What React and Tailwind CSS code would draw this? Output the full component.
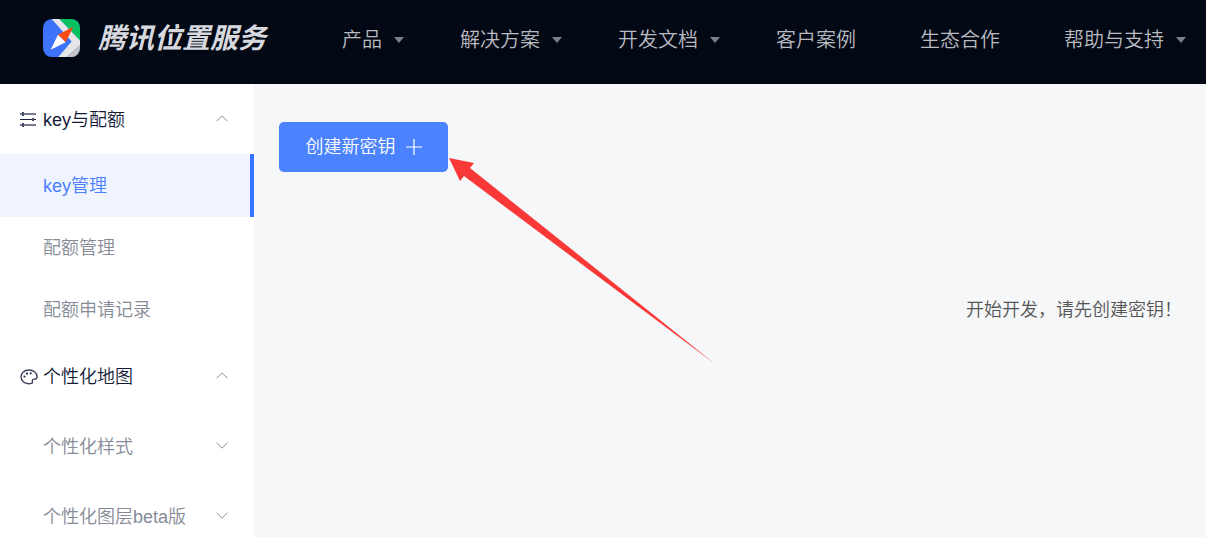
import React from 'react';

const navItems = [
  { label: '产品', menu: true },
  { label: '解决方案', menu: true },
  { label: '开发文档', menu: true },
  { label: '客户案例' },
  { label: '生态合作' },
  { label: '帮助与支持', menu: true },
];

const Logo = () => (
  <svg className="h-[38px] w-[37px]" viewBox="0 0 111 111" preserveAspectRatio="none" aria-hidden="true">
    <defs>
      <clipPath id="logo-shape">
        <rect width="111" height="111" rx="26" />
      </clipPath>
    </defs>
    <g clipPath="url(#logo-shape)">
      <rect width="111" height="111" fill="#3c73fa" />
      <path d="M49 0H111V63Z" fill="#05c160" />
      <path d="M26 0H49L111 63V76L71 111H46L86 66Z" fill="#e6e6e8" />
      <path d="M111 76V111H71Z" fill="#c3c4c6" />
      <path d="M91 23L45 46L68 68Z" fill="#fb4a14" />
      <path d="M23 90L45 46L68 68Z" fill="#fff" />
    </g>
  </svg>
);

const SlidersIcon = () => (
  <svg className="h-4 w-4" viewBox="0 0 16 16" fill="none" aria-hidden="true">
    <path d="M0 2H16M0 13H16" stroke="#777b90" strokeWidth="2" />
    <path d="M0 7.5H16" stroke="#1b2240" strokeWidth="1" />
    <path d="M3 0V4M13 6V9M3 11V15" stroke="#454b66" strokeWidth="2" />
  </svg>
);

const PaletteIcon = () => (
  <svg className="h-4 w-[18px]" viewBox="0 0 18 16" fill="none" aria-hidden="true">
    <path
      d="M9 1C4.400 1 1 3.900 1 7.800C1 11.900 4.400 14.800 8.500 14.800C10.300 14.800 12 14.600 12.300 13.800C12.700 12.700 11.800 11.300 12.800 10.500C13.700 9.800 15.600 10.600 16.500 9.500C17 8.800 17 8.200 17 7.400C16.800 3.700 13.400 1 9 1Z"
      stroke="#3a405a"
      strokeWidth="1.400"
    />
    <g fill="#2a3150">
      <circle cx="4.500" cy="7.500" r="1.100" />
      <circle cx="7" cy="4.700" r="1.100" />
      <circle cx="10.700" cy="4.300" r="1.100" />
    </g>
  </svg>
);

const Chevron = ({ up }) => (
  <svg className="mb-1 h-[7px] w-3" viewBox="0 0 12 7" fill="none" stroke="#8f9198" aria-hidden="true">
    <path d={up ? 'M0.500 6.300L6 0.800L11.500 6.300' : 'M0.500 0.700L6 6.200L11.500 0.700'} />
  </svg>
);

const Header = () => (
  <header className="flex h-[84px] shrink-0 items-center bg-[#020814] pb-2 pl-[43px]">
    <a href="#" className="flex shrink-0 items-center gap-[18px]">
      <Logo />
      <span className="pt-0.5 text-[28px] leading-9 font-bold whitespace-nowrap text-[#d8d9df] italic">腾讯位置服务</span>
    </a>
    <nav className="mt-1 ml-19 flex shrink-0 gap-14">
      {navItems.map((item) =>
        item.menu ? (
          <button key={item.label} type="button" className="flex items-center gap-3 text-xl font-[350] whitespace-nowrap text-[#b9bbc1]">
            {item.label}
            <svg className="h-[6px] w-[10px]" viewBox="0 0 10 6" fill="#7d808a" aria-hidden="true">
              <path d="M0 0H10L5 6Z" />
            </svg>
          </button>
        ) : (
          <a key={item.label} href="#" className="pr-2 text-xl font-[350] whitespace-nowrap text-[#b9bbc1]">
            {item.label}
          </a>
        )
      )}
    </nav>
  </header>
);

const GroupTitle = ({ icon, children }) => (
  <button type="button" className="flex h-[70px] w-full items-center pt-0.5 pr-[26px] pl-5 text-lg font-[350] text-[#141b38]">
    <span className="flex w-[23px] items-center">{icon}</span>
    <span className="flex-1 text-left">{children}</span>
    <Chevron up />
  </button>
);

const MenuLink = ({ active, children }) => (
  <a
    href="#"
    className={
      active
        ? 'flex h-[63px] items-center border-r-4 border-[#3874ff] bg-[#eff4ff] pl-[43px] text-lg font-[350] text-[#4a80ff]'
        : 'flex h-[62px] items-center pl-[43px] text-lg font-[350] text-[#868b97]'
    }
  >
    {children}
  </a>
);

const SubMenu = ({ children }) => (
  <button type="button" className="flex h-[70px] w-full items-center justify-between pt-0.5 pr-[26px] pl-[43px] text-lg font-[350] text-[#868b97]">
    {children}
    <Chevron />
  </button>
);

const Sidebar = () => (
  <aside className="w-[254px] shrink-0 overflow-hidden bg-white">
    <GroupTitle icon={<SlidersIcon />}>key与配额</GroupTitle>
    <MenuLink active>key管理</MenuLink>
    <MenuLink>配额管理</MenuLink>
    <MenuLink>配额申请记录</MenuLink>
    <GroupTitle icon={<PaletteIcon />}>个性化地图</GroupTitle>
    <SubMenu>个性化样式</SubMenu>
    <SubMenu>个性化图层beta版</SubMenu>
  </aside>
);

export default function App() {
  return (
    <div
      lang="zh-CN"
      className="relative flex h-screen flex-col overflow-hidden bg-[#f5f7f9] font-['Liberation_Sans','Noto_Sans_CJK_SC',sans-serif]"
    >
      <Header />
      <div className="flex min-h-0 flex-1">
        <Sidebar />
        <main className="flex-1 pt-[38px] pr-6 pl-[25px]">
          <button
            type="button"
            className="flex h-[50px] w-[169px] items-center justify-center gap-2.5 rounded-[5px] bg-[#4b83ff] text-lg font-[350] text-white"
          >
            创建新密钥
            <svg className="h-4 w-4" viewBox="0 0 16 16" stroke="#fff" strokeWidth="1.200" aria-hidden="true">
              <path d="M8 0V16M0 8H16" />
            </svg>
          </button>
          <p className="mt-31 text-right text-lg font-[350] text-[#555]">开始开发，请先创建密钥！</p>
        </main>
      </div>

      {/* arrow pointing at the create button */}
      <svg className="pointer-events-none absolute top-[158px] left-[449px] h-[206px] w-[266px]" viewBox="0 0 266 206" aria-hidden="true">
        <path d="M0 0L25 5L21 10L266 206L15 18L11 23Z" fill="#fb3838" />
      </svg>
    </div>
  );
}
